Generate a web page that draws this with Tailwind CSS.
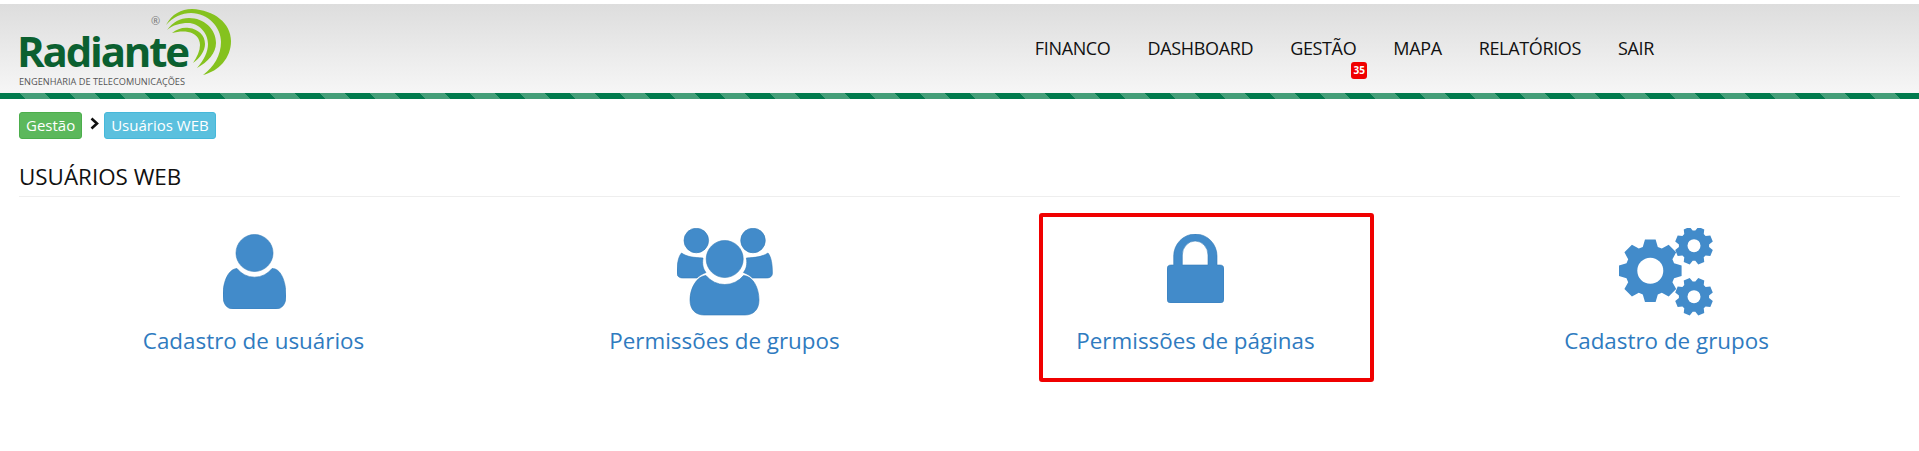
<!DOCTYPE html>
<html lang="en">
<head>
    <title>Usuários WEB</title>
    <script src="https://cdn.jsdelivr.net/npm/@tailwindcss/browser@4"></script>
</head>
<body class="relative min-h-screen bg-white font-['Open_Sans',sans-serif] text-[#111]">
    <!-- top bar -->
    <header class="mt-1 h-[89px] flex items-start bg-gradient-to-b from-[#dddddd] to-[#f6f6f6]">
        <div class="relative w-[240px] h-[89px] shrink-0 pl-[17px]">
            <div class="pt-[21px] text-[42px] leading-[52px] font-bold text-[#0b6030] tracking-[-2.2px]">Radiante</div>
            <div class="pl-[2px] text-[9.2px] leading-[10px] text-[#555] whitespace-nowrap">ENGENHARIA DE TELECOMUNICAÇÕES</div>
            <span class="absolute left-[151px] top-[10px] text-[11px] leading-[14px] text-[#777]">®</span>
            <svg class="absolute left-[160px] top-[2px]" width="75" height="75" viewBox="160 6 75 75" fill="#85c21e">
                <path d="M166 25C172 14 181 9 192 9C214 10 231 23 231 41C231 58 219 71 203 75C214 67 221 55 221 42C221 27 208 13 191 13C182 13 173 17 166 25Z"/>
                <path d="M167 30C173 22 180 18 189 18C204 18 216 29 216 43C216 53 208 62 197 68C204 60 208 52 208 44C208 33 199 23 188 23C180 23 173 25 167 30Z"/>
                <path d="M172 33C177 29 183 27 189 28C198 29 205 35 205 44C205 51 200 58 193 63C197 57 200 51 200 45C200 38 195 33 188 32C182 31 177 32 172 33Z"/>
            </svg>
        </div>
        <nav class="ml-auto mr-[265px] flex gap-[37px] pt-[32px] text-[18px] leading-[24px] tracking-[-0.35px]">
            <a>FINANCO</a>
            <a>DASHBOARD</a>
            <a class="relative">GESTÃO
                <span class="absolute left-[61px] top-[26px] w-[16px] h-[17px] rounded-[3px] bg-[#f00000] text-white text-[10px] leading-[17px] font-bold text-center tracking-normal">35</span>
            </a>
            <a>MAPA</a>
            <a>RELATÓRIOS</a>
            <a>SAIR</a>
        </nav>
    </header>
    <div class="h-[6px] bg-[repeating-linear-gradient(45deg,#007a4d_0,#007a4d_17.68px,#449e78_17.68px,#449e78_35.36px)]"></div>

    <!-- breadcrumb -->
    <div class="flex items-start pl-[19px] pt-[13px]">
        <span class="h-[27px] px-[6px] rounded-[3px] border border-[#4cae4c] bg-[#5cb85c] text-white text-[15px] leading-[25px]">Gestão</span>
        <svg class="ml-[8px] mr-[5px] mt-[5px]" width="9" height="13" viewBox="0 0 9 13"><path d="M1.500 1.500L7 6.500L1.500 11.500" fill="none" stroke="#111" stroke-width="2.600"/></svg>
        <span class="h-[27px] px-[6px] rounded-[3px] border border-[#46b8da] bg-[#5bc0de] text-white text-[15px] leading-[25px]">Usuários WEB</span>
    </div>

    <!-- title -->
    <h1 class="mx-[19px] mt-[23px] pb-[4px] border-b border-[#eeeeee] text-[22.4px] leading-[30px] font-normal text-[#111]">USUÁRIOS WEB</h1>

    <!-- cards -->
    <div class="grid grid-cols-4 ml-[18px] mr-[17px] text-[#2f7bbf] text-[22.4px] leading-[30px] text-center">
        <a>
            <div class="h-[129px] flex justify-center items-start pt-[37px] pl-[2px]">
                <svg width="63" height="75" viewBox="0 0 63 75" fill="#428bca" stroke="#337ab7" stroke-width="0.600">
                    <circle cx="31.500" cy="19" r="18.500"/>
                    <path d="M14 34.500A22 22 0 0 0 49 34.500C57 34 63 46 63 62C63 70 59 75 53 75H10C4 75 0 70 0 62C0 46 6 35 14 34.500Z"/>
                </svg>
            </div>
            <span>Cadastro de usuários</span>
        </a>
        <a>
            <div class="h-[129px] flex justify-center items-start pt-[31px] pl-[1px]">
                <svg width="96" height="88" viewBox="0 0 96 88" fill="#428bca" stroke="#337ab7" stroke-width="0.600">
                    <circle cx="19.300" cy="12.500" r="12.300"/>
                    <circle cx="76" cy="12.500" r="12.300"/>
                    <circle cx="47.700" cy="31" r="18.500"/>
                    <path d="M4.500 25C10 29 17 29.500 26 30C25 36 26 41 29 44.500C25 46 22 48 20 50H6C2 50 0 48 0 45C0 37 1 29 4.500 25Z"/>
                    <path d="M91 25C85 29 78 29.500 69.400 30C70.400 36 69.400 41 66.400 44.500C70.400 46 73.400 48 75.400 50H89.400C93.400 50 95.400 48 95.400 45C95.400 37 94.400 29 91 25Z"/>
                    <path d="M29 47.500A24 24 0 0 0 66.500 47.500C76 48 82 60 82 72C82 82 76 87 68 87H27C19 87 13 82 13 72C13 60 20 48 29 47.500Z"/>
                </svg>
            </div>
            <span>Permissões de grupos</span>
        </a>
        <a>
            <div class="h-[129px] flex justify-center items-start pt-[37px]">
                <svg width="57" height="69" viewBox="0 0 57 69" fill="#428bca" stroke="#337ab7" stroke-width="0.600">
                    <path fill-rule="evenodd" d="M6.700 31V22A21.650 22 0 0 1 50 22V31H53C55.500 31 57 32.500 57 35V65C57 67.500 55.500 69 53 69H4C1.500 69 0 67.500 0 65V35C0 32.500 1.500 31 4 31ZM15.300 31H41V21A12.850 14 0 0 0 15.300 21Z"/>
                </svg>
            </div>
            <span>Permissões de páginas</span>
        </a>
        <a>
            <div class="h-[129px] flex justify-center items-start pt-[31px]">
                <svg width="95" height="88" viewBox="0 0 95 88" fill="#428bca">
                    <defs>
                        <path id="gear" d="M-.24-.76L-.17-1L.17-1L.24-.76L.368-.707L.587-.827L.827-.587L.707-.368L.76-.24L1-.17L1 .17L.76 .24L.707 .368L.827 .587L.587 .827L.368 .707L.24 .76L.17 1L-.17 1L-.24 .76L-.368 .707L-.587 .827L-.827 .587L-.707 .368L-.76 .24L-1 .17L-1-.17L-.76-.24L-.707-.368L-.827-.587L-.587-.827L-.368-.707Z"/>
                    </defs>
                    <use href="#gear" transform="translate(31.300 42.700) scale(31.300)"/>
                    <circle cx="31.300" cy="42.700" r="13" fill="#fff"/>
                    <use href="#gear" transform="translate(75 17.700) rotate(22.500) scale(19)"/>
                    <circle cx="75" cy="17.700" r="6.500" fill="#fff"/>
                    <use href="#gear" transform="translate(75 68.700) rotate(22.500) scale(19)"/>
                    <circle cx="75" cy="68.700" r="6.500" fill="#fff"/>
                </svg>
            </div>
            <span>Cadastro de grupos</span>
        </a>
    </div>

    <!-- red highlight drawn over the page -->
    <div class="absolute left-[1039px] top-[213px] w-[335px] h-[169px] border-[4px] border-[#f00000] rounded-[3px]"></div>
</body>
</html>
